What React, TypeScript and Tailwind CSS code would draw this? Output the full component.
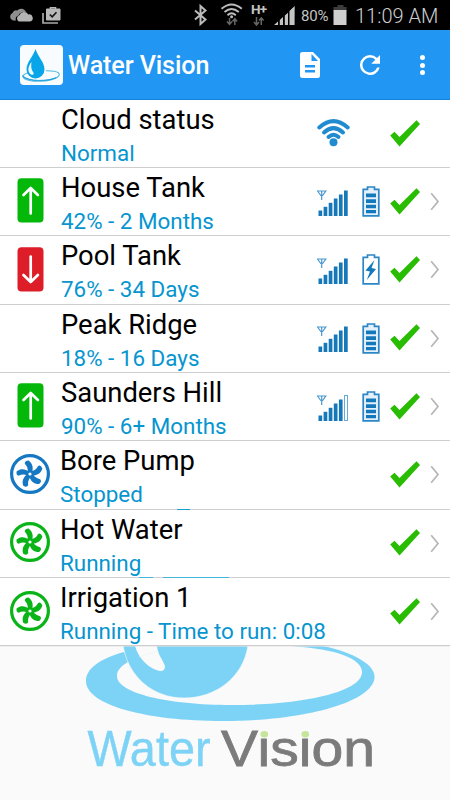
import React from "react";

type RowData = {
  title: string;
  detail: string;
  icon?: "up" | "down" | "fanBlue" | "fanGreen";
  signal?: number;
  battery?: "full" | "charging";
  cloud?: boolean;
  pump?: boolean;
};

const rows: RowData[] = [
  { title: "Cloud status", detail: "Normal", cloud: true },
  { title: "House Tank", detail: "42% - 2 Months", icon: "up", signal: 6, battery: "full" },
  { title: "Pool Tank", detail: "76% - 34 Days", icon: "down", signal: 6, battery: "charging" },
  { title: "Peak Ridge", detail: "18% - 16 Days", signal: 6, battery: "full" },
  { title: "Saunders Hill", detail: "90% - 6+ Months", icon: "up", signal: 5, battery: "full" },
  { title: "Bore Pump", detail: "Stopped", icon: "fanBlue", pump: true },
  { title: "Hot Water", detail: "Running", icon: "fanGreen", pump: true },
  { title: "Irrigation 1", detail: "Running - Time to run: 0:08", icon: "fanGreen", pump: true },
];

function StatusBar() {
  return (
    <div className="flex h-[30px] items-center bg-black text-[#c4c4c4]">
      <svg className="block h-[30px] w-[250px] shrink-0" viewBox="0 0 250 30">
        <path d="M13 20.500a4 4 0 0 1-.5-7.500 4 4 0 0 1 5-2.500 5 5 0 0 1 8.500 1.500c-4-.5-7 1-7.500 3.500-2.500.5-3.500 3-2.500 5z" fill="#8f8f8f" />
        <path d="M19.500 21.500a3.200 3.200 0 0 1-.2-6.200 5 5 0 0 1 9-.8 3.600 3.600 0 0 1 1.700 7z" fill="#b4b4b4" />
        <path d="M43 13v10h15" fill="none" stroke="#aaa" strokeWidth="1.700" />
        <path d="M46.500 9h13.500v11h-13.500z" fill="#b8b8b8" stroke="#b8b8b8" strokeLinejoin="round" />
        <path d="M50.500 9V7.800h5V9" fill="none" stroke="#b8b8b8" strokeWidth="1.600" />
        <path d="m49.800 14.500 2.400 2.400 4.300-4.600" fill="none" stroke="#111" strokeWidth="1.600" />
        <path d="m195 10.500 10.500 9-5 4.500V6l5 4.500-10.500 9" fill="none" stroke="#bbb" strokeWidth="2" />
        <g fill="none" stroke="#bcbcbc" strokeWidth="1.900">
          <path d="M221.500 8.800Q231.500 0 241.800 8.800" />
          <path d="M224.500 12Q231.500 5.800 238.800 12" />
          <path d="M227.500 15.200Q231.500 11.500 235.800 15.200" />
        </g>
        <circle cx="231.600" cy="16.800" r="1.500" fill="#bbb" />
        <path d="M229.500 18v6m-2.500-2.500 2.500 2.800 2.500-2.800M234.800 25v-6m-2.300 2.500 2.300-2.800 2.300 2.800" fill="none" stroke="#666" strokeWidth="1.500" />
      </svg>
      <div className="flex h-[26px] w-[22px] shrink-0 flex-col pl-[1px]">
        <span className="font-['Roboto',sans-serif] text-[13.500px] leading-[14px] font-bold tracking-[-0.700px]">H+</span>
        <svg className="block h-[10px] w-[14px]" viewBox="0 0 14 10">
          <path d="M5.500 1v8M3 6l2.500 3L8 6M10.300 9V2M8 4.500 10.300 1.800l2.300 2.700" fill="none" stroke="#666" strokeWidth="1.500" />
        </svg>
      </div>
      <svg className="block h-[30px] w-[29px] shrink-0" viewBox="0 0 29 30">
        <path d="M2 25l4-3.500V25zM7.800 20l3.200-3v8H7.800zM12.800 15.500l3.200-2.800V25h-3.200zM17.700 11l3.200-3v17h-3.200zM22.500 7l0-.2 0 18.200z" fill="#c4c4c4" />
        <path d="M22.300 6.500 22.500 25V6.500z" fill="#c4c4c4" />
        <path d="M17.700 11l4.900-5v19h-4.900z" fill="#c4c4c4" />
      </svg>
      <span className="w-[32px] shrink-0 pt-[1px] font-['Roboto',sans-serif] text-[15px] leading-[30px] tracking-[-0.200px]">80%</span>
      <svg className="block h-[30px] w-[21px] shrink-0" viewBox="0 0 21 30">
        <path d="M4.500 5h6v2H13.500v4H.5V7h4z" fill="#3c3c3c" />
        <path d="M.5 10h13v15H.5z" fill="#cfcfcf" />
      </svg>
      <span className="pt-[2px] pl-[1px] font-['Roboto',sans-serif] text-[20px] leading-[30px] font-light whitespace-nowrap text-[#d0d0d0]">11:09 AM</span>
    </div>
  );
}

function Header() {
  return (
    <header className="flex h-[70px] items-center border-b border-[#1682dc] bg-[#2196f3] pl-[20px] text-white">
      <svg className="mt-[1px] block h-[40px] w-[43px]" viewBox="0 0 43 40">
        <rect width="43" height="40" rx="4" fill="#f9fcff" />
        <path d="M9 27.500C3 29 1 32 5 34c7 3.500 24 3 32-1.500 5-3.500 2-7-11-6.800" fill="none" stroke="#4fbde6" strokeWidth="1.100" />
        <path d="M2.500 30.500c2 6 23 6.500 34 2-8 4-28 4.500-34-2z" fill="#0d93d1" stroke="#0d93d1" strokeWidth=".6" />
        <path d="M15.500 4C13 12 6.500 17 6.500 24.500a9 9 0 0 0 18 0C24.500 17 18 12 15.500 4z" fill="#08a6e8" />
        <path d="M11.500 17c-4 5-4 10-.5 12.500 2.500 1 3.500-.5 2-2.500-2-3-2-6-1.500-10z" fill="#eefaff" />
      </svg>
      <h1 className="w-[231px] pt-[3px] pl-[5px] font-['Roboto',sans-serif] text-[25.200px] leading-[32px] font-medium tracking-[-0.120px] whitespace-nowrap">Water Vision</h1>
      <svg className="mt-[1px] ml-[6px] block h-[26px] w-[20px]" viewBox="0 0 20 26">
        <path fillRule="evenodd" fill="white" d="M2.500 0H13l7 7v16.500a2.500 2.500 0 0 1-2.500 2.500h-15A2.500 2.500 0 0 1 0 23.500v-21A2.500 2.500 0 0 1 2.500 0ZM11.500 2v7H18ZM5 13v2.500h10V13ZM5 18v2.500h10V18Z" />
      </svg>
      <svg className="mt-[1px] ml-[40px] block h-[20px] w-[20px]" viewBox="4 4 16 16" preserveAspectRatio="none">
        <path fill="white" d="M17.650 6.350A7.960 7.960 0 0 0 12 4a8 8 0 1 0 7.730 10h-2.080A6 6 0 1 1 12 6c1.660 0 3.140.69 4.220 1.780L13 11h7V4z" />
      </svg>
      <div className="mt-[1px] ml-[40px] flex flex-col gap-[2.500px]">
        <i className="block size-[5px] rounded-full bg-white" />
        <i className="block size-[5px] rounded-full bg-white" />
        <i className="block size-[5px] rounded-full bg-white" />
      </div>
    </header>
  );
}

function LeftIcon({ kind }: { kind?: RowData["icon"] }) {
  if (!kind) return null;
  if (kind === "up" || kind === "down") {
    return (
      <svg className="ml-[17px] block h-[45px] w-[27px]" viewBox="0 0 27 45">
        <rect x=".5" y=".2" width="26" height="44.300" rx="4" fill={kind === "up" ? "#04b80a" : "#dd1e28"} />
        <g transform={kind === "down" ? "translate(0 45) scale(1 -1)" : undefined}>
          <path d="M13.700 35.500V10M6.500 17l7.200-7 7.200 7" fill="none" stroke="white" strokeWidth="2.700" strokeLinecap="round" strokeLinejoin="round" />
        </g>
      </svg>
    );
  }
  const color = kind === "fanBlue" ? "#1678c2" : "#0ab418";
  return (
    <svg className="ml-[10px] block size-[40px]" viewBox="0 0 40 40">
      <circle cx="20" cy="20" r="18.400" fill="white" stroke={color} strokeWidth="3.200" />
      <g fill={color}>
        {[0, 72, 144, 216, 288].map((a) => (
          <path key={a} d="M17.800 18C18 14.500 17 12 14.800 9.800Q14.500 6.800 18.500 6.500C22.800 9.500 23.500 14 22 18.500Z" transform={`rotate(${a} 20 20)`} />
        ))}
        <circle cx="20" cy="20" r="3.800" />
      </g>
      <circle cx="20" cy="20" r="1.600" fill="white" />
    </svg>
  );
}

function Signal({ level }: { level: number }) {
  const tops = [20.500, 16.800, 12.800, 8.500, 4.500, .5];
  return (
    <svg className="block h-[27px] w-[31px]" viewBox="0 0 31 27">
      <path d="M.5 1h8.300L5.600 5.500H3.800zM4.700 1v9" fill="none" stroke="#4b98ce" strokeWidth="1.200" />
      {tops.map((y, i) => i < level ? (
        <rect key={y} x={1.500 + i * 5.100} y={y} width="3.700" height={26 - y} fill="#1678b8" />
      ) : (
        <rect key={y} x={2 + i * 5.100} y={y} width="3" height={25.500 - y} fill="white" stroke="#69a9d5" />
      ))}
    </svg>
  );
}

function Battery({ state }: { state: "full" | "charging" }) {
  return (
    <svg className="block h-[31px] w-[18px]" viewBox="0 0 18 31">
      <path d="M1.200 3.300h4.300V1h7v2.300h4.300v26.500H1.200z" fill={state === "full" ? "#e4f1fa" : "white"} stroke="#2d86c5" strokeWidth="1.700" />
      {state === "full" ? (
        <path d="M4 7.500h10v3.800H4zm0 5.700h10V17H4zm0 5.500h10v3.500H4zm0 5.300h10v3.300H4z" fill="#1478bd" />
      ) : (
        <path d="M12.500 6 3.500 16.500l4.500 1L4.800 26l9.200-11-4.500-1z" fill="#1478bd" />
      )}
    </svg>
  );
}

function CloudWifi() {
  return (
    <svg className="block h-[28px] w-[33px]" viewBox="0 0 33 28">
      <g fill="none" stroke="#218bd0" strokeWidth="4" strokeLinecap="round">
        <path d="M2.300 8.500Q16.500-4.300 30.700 8.500" />
        <path d="M7 13.500Q16.500 4.800 26 13.500" />
        <path d="M11.500 18Q16.500 13.500 21.500 18" />
      </g>
      <circle cx="16.500" cy="23.300" r="4" fill="#218bd0" />
    </svg>
  );
}

function Divider({ index }: { index: number }) {
  if (index === 5) {
    return <div className="flex h-px bg-[#cecece] pl-[177px]"><i className="block w-[13px] bg-[#1aa0cc]" /></div>;
  }
  if (index === 6) {
    return <div className="flex h-px gap-[10px] bg-[#cecece] pl-[139px]"><i className="block w-[14px] bg-[#46b4dc]" /><i className="block w-[66px] bg-[#46b4dc]" /></div>;
  }
  return <div className="h-px bg-[#cecece]" />;
}

function StatusRow({ row, index }: { row: RowData; index: number }) {
  return (
    <div className={`flex flex-col bg-white ${index === 0 ? "h-[68px]" : "h-[68.350px]"}`}>
      <div className="flex min-h-0 flex-1">
        <div className={`shrink-0 ${row.pump ? "w-[60px] pt-[12.500px]" : "w-[61px] pt-[10.200px]"}`}>
          <LeftIcon kind={row.icon} />
        </div>
        <div className="flex w-[256px] shrink-0 flex-col pt-[4px] font-['Roboto',sans-serif] whitespace-nowrap">
          <div className="h-[33px] text-[27.400px] leading-[33px] text-black">{row.title}</div>
          <div className="h-[31px] text-[22.400px] leading-[33px] text-[#0695cf]">{row.detail}</div>
        </div>
        <div className={`flex w-[45px] shrink-0 ${row.cloud ? "pt-[19px]" : "pt-[21.500px]"}`}>
          {row.cloud && <CloudWifi />}
          {row.signal && <Signal level={row.signal} />}
        </div>
        <div className="w-[28px] shrink-0 pt-[18px]">{row.battery && <Battery state={row.battery} />}</div>
        <svg className={`mt-[19.500px] block h-[27px] w-[30px] shrink-0 ${row.pump ? "ml-px" : ""}`} viewBox="0 0 30 27">
          <path d="m.2 15.500 4.300-3.700 5 5.200L26.500.3 30 4 9.500 26.500z" fill="#28bd02" />
        </svg>
        {!row.cloud && (
          <svg className="mt-[24px] ml-[10px] block h-[19px] w-[10px]" viewBox="0 0 10 19">
            <path d="m1.200 1.200 6.800 8.300-6.800 8.300" fill="none" stroke="#b5b5b5" strokeWidth="1.700" />
          </svg>
        )}
      </div>
      <Divider index={index} />
    </div>
  );
}

function BrandFooter() {
  return (
    <svg className="block min-h-0 w-full flex-1" viewBox="0 0 450 153.550" preserveAspectRatio="xMidYMin slice">
      <rect width="450" height="154" fill="#fafafa" />
      <path fill="#7dd3f5" fillRule="evenodd" d="M124 6C99 13 86 23 86 35c0 24 60 40 137 40 85 0 151-20 151.500-44C375 19 355 7 323 0h-32c46 3 71 13 71 26 0 20-59 33-130 33-65 0-115-12-115-29 0-6 4-10 13-15z" />
      <path fill="#7dd3f5" stroke="#fafafa" strokeWidth=".6" d="M123-1C128 31 153 52 184 52c33 0 60-22 64-53z" />
      <path fill="#fafafa" d="M135 0c4 14 15 23 25 25 4 0 5-2 5-5C162 12 158 9 157 0z" />
      <path d="m139 11 19-6" stroke="#e8f3f6" strokeWidth=".5" />
      <rect width="450" height="1" fill="#e3e3e3" fillOpacity=".55" />
      <g fontFamily="Liberation Sans, Arial, sans-serif" fontSize="50">
        <text x="87.500" y="120" textLength="123" lengthAdjust="spacingAndGlyphs" fill="#7dd3f5" stroke="#7dd3f5" strokeWidth=".4">Water</text>
        <text y="120" fill="#7b7b7b" stroke="#7b7b7b" strokeWidth=".8">
          <tspan x="221" textLength="37" lengthAdjust="spacingAndGlyphs">V</tspan>
          <tspan x="257.500" textLength="117.500" lengthAdjust="spacingAndGlyphs">ision</tspan>
        </text>
      </g>
      <path d="M259.500 82h9v10h-9zM300.500 82h9v10h-9z" fill="#fafafa" />
      <ellipse cx="264.300" cy="88.300" rx="3.800" ry="3.200" fill="#c5e59a" />
      <ellipse cx="305.300" cy="88.300" rx="3.800" ry="3.200" fill="#c5e59a" />
    </svg>
  );
}

export default function App() {
  return (
    <main className="flex h-[800px] w-[450px] flex-col overflow-hidden bg-[#fafafa]">
      <StatusBar />
      <Header />
      <section className="shrink-0">
        {rows.map((row, index) => <StatusRow key={row.title} row={row} index={index} />)}
      </section>
      <BrandFooter />
    </main>
  );
}
